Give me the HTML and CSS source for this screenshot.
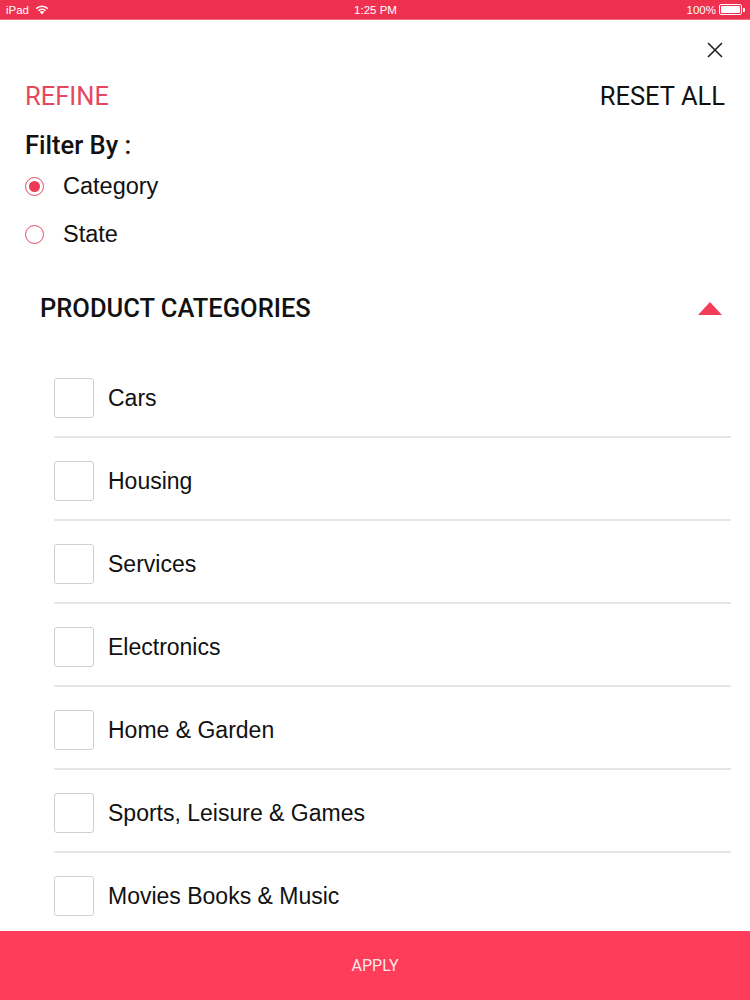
FILE: index.html
```html
<!DOCTYPE html>
<html>
<head>
<meta charset="utf-8">
<link rel="stylesheet" href="styles.css">
</head>
<body>
<div class="screen">
  <div class="status">
    <div class="status-left">
      <span>iPad</span>
      <svg class="wifi" width="14" height="10" viewBox="0 0 14 10">
        <path d="M7 9.5 L4.8 7.1 A3.2 3.2 0 0 1 9.2 7.1 Z" fill="#fff"/>
        <path d="M2.9 5.2 A5.8 5.8 0 0 1 11.1 5.2 L10 6.3 A4.2 4.2 0 0 0 4 6.3 Z" fill="#fff"/>
        <path d="M0.8 3.1 A8.8 8.8 0 0 1 13.2 3.1 L12.1 4.2 A7.2 7.2 0 0 0 1.9 4.2 Z" fill="#fff"/>
      </svg>
    </div>
    <div class="status-center">1:25 PM</div>
    <div class="status-right">
      <span>100%</span>
      <span class="battery"><span class="battery-fill"></span></span>
      <span class="battery-tip"></span>
    </div>
  </div>

  <div class="close-row">
    <svg class="close" width="16" height="16" viewBox="0 0 16 16">
      <path d="M1 1 L15 15 M15 1 L1 15" stroke="#222" stroke-width="1.6" fill="none"/>
    </svg>
  </div>

  <div class="header">
    <span class="refine">REFINE</span>
    <span class="reset">RESET ALL</span>
  </div>

  <div class="filter-title">Filter By :</div>

  <div class="radio-row first">
    <span class="radio"><span class="dot"></span></span>
    <span class="radio-label">Category</span>
  </div>
  <div class="radio-row">
    <span class="radio"></span>
    <span class="radio-label">State</span>
  </div>

  <div class="section-head">
    <span class="section-title">PRODUCT CATEGORIES</span>
    <span class="triangle"></span>
  </div>

  <div class="list">
    <div class="item"><span class="check"></span><span class="item-label">Cars</span></div>
    <div class="item"><span class="check"></span><span class="item-label">Housing</span></div>
    <div class="item"><span class="check"></span><span class="item-label">Services</span></div>
    <div class="item"><span class="check"></span><span class="item-label">Electronics</span></div>
    <div class="item"><span class="check"></span><span class="item-label">Home &amp; Garden</span></div>
    <div class="item"><span class="check"></span><span class="item-label">Sports, Leisure &amp; Games</span></div>
    <div class="item"><span class="check"></span><span class="item-label">Movies Books &amp; Music</span></div>
  </div>

  <div class="apply">APPLY</div>
</div>
</body>
</html>
```

FILE: styles.css
```css
* { box-sizing: border-box; }
html, body { margin: 0; padding: 0; background: #fff; }
body { font-family: Roboto, "Liberation Sans", sans-serif; color: #111; }

.screen {
  width: 750px;
  height: 1000px;
  display: flex;
  flex-direction: column;
  overflow: hidden;
}

.status {
  height: 20px;
  flex: none;
  background: #ef3150;
  color: #fff;
  font-family: "Liberation Sans", Arial, sans-serif;
  font-size: 11.5px;
  display: flex;
  align-items: center;
  justify-content: space-between;
  padding: 0 5px 0 6px;
  border-bottom: 1px solid #f56a80;
}
.status-left { display: flex; align-items: center; gap: 6px; width: 200px; }
.status-center { flex: 1; text-align: center; }
.status-right { display: flex; align-items: center; justify-content: flex-end; width: 200px; gap: 3px; }
.battery {
  width: 23px; height: 11px; border: 1px solid #fff; border-radius: 2px; padding: 1px; display: flex;
}
.battery-fill { flex: 1; background: #fff; border-radius: 1px; }
.battery-tip { width: 2px; height: 4px; background: #fff; margin-left: -2px; border-radius: 0 1px 1px 0; }

.close-row {
  flex: none;
  display: flex;
  justify-content: flex-end;
  padding: 22px 27px 0 0;
  height: 38px;
}
.close { display: block; }

.header {
  flex: none;
  display: flex;
  justify-content: space-between;
  align-items: center;
  height: 30px;
  margin-top: 23px;
  padding: 0 25px;
  font-size: 25.5px;
}
.refine { color: #e6475f; }
.reset { color: #111; }

.filter-title {
  flex: none;
  height: 30px;
  line-height: 30px;
  margin-top: 19px;
  padding-left: 25px;
  font-size: 25.5px;
  font-weight: 500;
}

.radio-row {
  flex: none;
  height: 48px;
  display: flex;
  align-items: center;
  padding-left: 25px;
}
.radio-row.first { margin-top: 2px; }
.radio {
  width: 19px;
  height: 19px;
  border: 1.6px solid #e34d68;
  border-radius: 50%;
  display: flex;
  align-items: center;
  justify-content: center;
}
.dot { width: 11px; height: 11px; border-radius: 50%; background: #ef3a56; }
.radio-label {
  margin-left: 19px;
  font-family: "Liberation Sans", Arial, sans-serif;
  font-size: 23.5px;
  color: #111;
}

.section-head {
  flex: none;
  height: 48px;
  margin-top: 26px;
  display: flex;
  align-items: center;
  justify-content: space-between;
  padding: 0 28px 0 40px;
}
.section-title { font-size: 25.5px; font-weight: 500; }
.triangle {
  width: 0; height: 0;
  border-left: 12.5px solid transparent;
  border-right: 12.5px solid transparent;
  border-bottom: 13px solid #f23e5a;
}

.list {
  flex: 1;
  min-height: 0;
  overflow: hidden;
  margin-top: 23px;
  padding: 0 19px 0 54px;
}
.item {
  height: 83px;
  display: flex;
  align-items: flex-start;
  padding-top: 23px;
  border-bottom: 2px solid #e6e6e6;
}
.check {
  width: 40px;
  height: 40px;
  border: 1px solid #cfcfcf;
  border-radius: 3px;
  flex: none;
}
.item-label {
  margin-left: 14px;
  height: 40px;
  line-height: 40px;
  font-family: "Liberation Sans", Arial, sans-serif;
  font-size: 23px;
  color: #111;
}

.apply {
  flex: none;
  height: 69px;
  background: #fd3d5a;
  color: #fde8ec;
  font-size: 16px;
  display: flex;
  align-items: center;
  justify-content: center;
}
```
